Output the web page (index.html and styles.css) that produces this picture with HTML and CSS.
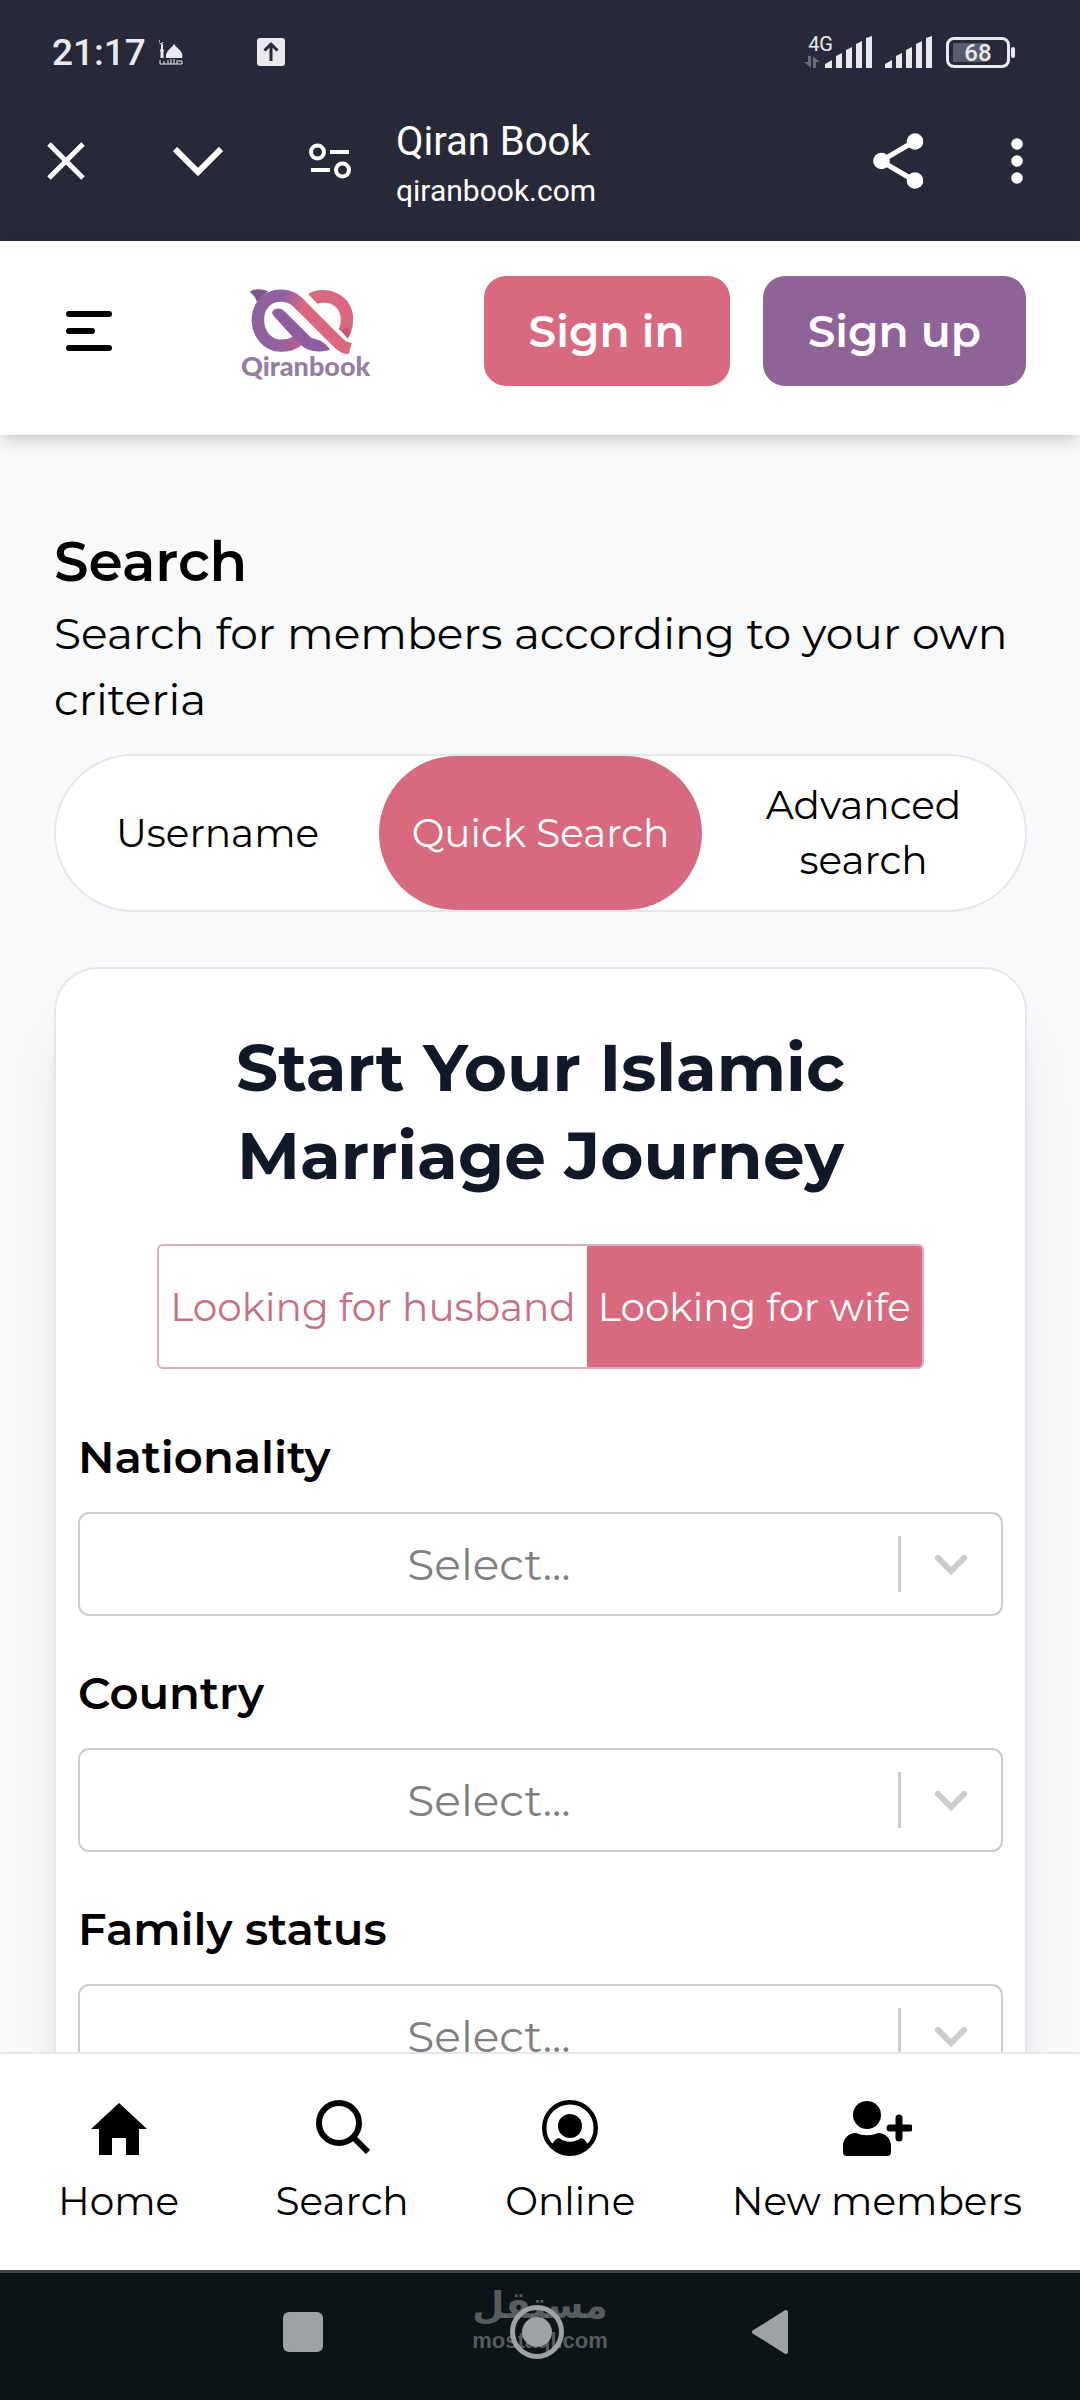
FILE: index.html
```html
<!DOCTYPE html>
<html lang="en">
<head>
<meta charset="utf-8">
<meta name="viewport" content="width=device-width, initial-scale=1">
<title>Qiran Book</title>
<link rel="stylesheet" href="styles.css">
</head>
<body>
<div class="status-bar">
  <div class="status-left">
    <span class="clock">21:17</span>
    <svg class="mosque" viewBox="0 0 24 25" width="24" height="25" aria-hidden="true">
      <path d="M1.500 18V12L1 10L2 9V5L3 3L4 5V9L5 10L4.500 12V18Z M7 18C6 11 12 9 15 4C18 9 25 11 23 18Z" fill="currentColor"/>
      <path d="M1 0a2 2 0 1 0 3 2" fill="none" stroke="currentColor"/>
      <path d="M1 20v4h22v-3h-4M5 21v3M9 20v4M12 19v5M15 19v5M18 20v4" fill="none" stroke="currentColor" stroke-width="1"/>
    </svg>
    <svg class="upload" viewBox="0 0 28 28" width="28" height="28" aria-hidden="true">
      <rect width="28" height="28" rx="3" fill="currentColor"/>
      <path d="M14 23V7M7.500 12.500L14 6l6.500 6.500" fill="none" stroke="#282938" stroke-width="3"/>
    </svg>
  </div>
  <div class="status-right">
    <div class="network">
      <span>4G</span>
      <svg viewBox="0 0 16 12" width="16" height="12" aria-hidden="true"><path d="M4 0h3v12L0 6h4zM9 12V0l7 6h-4v6z" fill="#6b6c78"/></svg>
    </div>
    <svg viewBox="0 0 48 32" width="48" height="32" aria-hidden="true"><path d="M0 32v-4l7-4v8zM11 32V20l6-3v15zM21 32V14l6-3v21zM31 32V8l6-3v27zM41 32V2l6-2v32z" fill="currentColor"/></svg>
    <svg class="second-sim" viewBox="0 0 48 32" width="48" height="32" aria-hidden="true"><path d="M0 32v-4l7-4v8zM11 32V20l6-3v15zM21 32V14l6-3v21zM31 32V8l6-3v27zM41 32V2l6-2v32z" fill="currentColor"/></svg>
    <div class="battery">68</div>
  </div>
</div>

<div class="browser-bar">
  <button type="button" class="icon-button close" aria-label="Close"><svg viewBox="0 0 38 38" width="38" height="38"><path d="M2 2l34 34M36 2L2 36" stroke="currentColor" stroke-width="5"/></svg></button>
  <button type="button" class="icon-button collapse" aria-label="Minimise"><svg viewBox="0 0 50 29" width="50" height="29"><path d="M2 2l23 23L48 2" fill="none" stroke="currentColor" stroke-width="6"/></svg></button>
  <button type="button" class="icon-button site-info" aria-label="Site settings"><svg viewBox="0 0 42 36" width="42" height="36"><g fill="none" stroke="currentColor" stroke-width="4"><circle cx="8.500" cy="9" r="6.500"/><circle cx="33.500" cy="27" r="6.500"/><path d="M21 9h19M2 27h19"/></g></svg></button>
  <div class="page-id">
    <div class="page-title">Qiran Book</div>
    <div class="page-url">qiranbook.com</div>
  </div>
  <button type="button" class="icon-button" aria-label="Share"><svg viewBox="0 0 50 56" width="50" height="56"><path d="M42 8L8 28l34 20" fill="none" stroke="currentColor" stroke-width="5"/><g fill="currentColor"><circle cx="42" cy="8.500" r="8.300"/><circle cx="8.500" cy="28" r="8.300"/><circle cx="42" cy="47.500" r="8.300"/></g></svg></button>
  <button type="button" class="icon-button more" aria-label="More options"><svg viewBox="0 0 12 46" width="12" height="46"><g fill="currentColor"><circle cx="6" cy="6" r="5.800"/><circle cx="6" cy="23" r="5.800"/><circle cx="6" cy="40" r="5.800"/></g></svg></button>
</div>

<header class="site-header">
  <button type="button" class="icon-button menu" aria-label="Menu"><svg viewBox="0 0 46 42" width="46" height="42"><path d="M3 4h40M3 21h23M3 38h40" stroke="#000" stroke-width="6" stroke-linecap="round"/></svg></button>
  <a class="logo" href="#">
    <svg class="logo-mark" viewBox="85 56 320 198" width="107" height="66" aria-hidden="true">
      <defs>
        <linearGradient id="band" gradientUnits="userSpaceOnUse" x1="190" y1="80" x2="250" y2="110"><stop offset="0" stop-color="#91619f"/><stop offset="1" stop-color="#db6880"/></linearGradient>
        <linearGradient id="tail" gradientUnits="userSpaceOnUse" x1="175" y1="0" x2="240" y2="0"><stop offset="0" stop-color="#91619f"/><stop offset="1" stop-color="#b95e86"/></linearGradient>
      </defs>
      <path d="M87 68C100 56 125 58 142 66L108 98C104 84 98 76 87 68Z" fill="#815293"/>
      <path d="M262 74C280 62 315 57 345 70C385 86 402 125 396 165C394 182 390 193 382 205L354 180C364 155 362 130 345 113C330 98 308 98 290 103Z" fill="#d9697f"/>
      <path d="M362 185L376 172C383 177 389 181 389 188L381 208Z" fill="#c2557a"/>
      <path d="M111 150C111 194 140 229 180 229C198 229 212 227 230 214" fill="none" stroke="url(#tail)" stroke-width="37"/>
      <path d="M154 128C160 116 178 113 190 125L268 202C280 214 300 202 328 241C300 250 270 247 253 237C243 231 235 223 225 213L164 146C158 140 154 135 154 128Z" fill="#8f5da0"/>
      <path d="M111 156C110 108 140 79 180 79C209 79 224 91 242 110L350 218C364 232 370 234 388 239" fill="none" stroke="url(#band)" stroke-width="37"/>
    </svg>
    <span class="logo-name">Qiranbook</span>
  </a>
  <div class="auth">
    <button type="button" class="auth-button sign-in">Sign in</button>
    <button type="button" class="auth-button sign-up">Sign up</button>
  </div>
</header>

<main class="content">
  <h1 class="page-heading">Search</h1>
  <p class="lead">Search for members according to your own criteria</p>
  <div class="tabs" role="tablist">
    <button type="button" role="tab" class="tab" aria-selected="false">Username</button>
    <button type="button" role="tab" class="tab tab-active" aria-selected="true">Quick Search</button>
    <button type="button" role="tab" class="tab" aria-selected="false">Advanced search</button>
  </div>
  <form class="card">
    <h2 class="card-title">Start Your Islamic<br>Marriage Journey</h2>
    <div class="toggle">
      <button type="button" class="toggle-option" aria-pressed="false">Looking for husband</button>
      <button type="button" class="toggle-option toggle-active" aria-pressed="true">Looking for wife</button>
    </div>
    <div class="field">
      <label class="field-label" for="nationality">Nationality</label>
      <div class="select-box">
        <select id="nationality"><option>Select...</option></select>
        <span class="separator"></span>
        <svg class="chevron" viewBox="0 0 34 22" width="34" height="22" aria-hidden="true"><path d="M4 5l13 13L30 5" fill="none" stroke="#ccc" stroke-width="6" stroke-linecap="round"/></svg>
      </div>
    </div>
    <div class="field">
      <label class="field-label" for="country">Country</label>
      <div class="select-box">
        <select id="country"><option>Select...</option></select>
        <span class="separator"></span>
        <svg class="chevron" viewBox="0 0 34 22" width="34" height="22" aria-hidden="true"><path d="M4 5l13 13L30 5" fill="none" stroke="#ccc" stroke-width="6" stroke-linecap="round"/></svg>
      </div>
    </div>
    <div class="field">
      <label class="field-label" for="family">Family status</label>
      <div class="select-box">
        <select id="family"><option>Select...</option></select>
        <span class="separator"></span>
        <svg class="chevron" viewBox="0 0 34 22" width="34" height="22" aria-hidden="true"><path d="M4 5l13 13L30 5" fill="none" stroke="#ccc" stroke-width="6" stroke-linecap="round"/></svg>
      </div>
    </div>
  </form>
</main>

<nav class="bottom-nav">
  <a href="#"><svg viewBox="0 0 56 56" height="56" width="56" aria-hidden="true"><path d="M28 3L56 29h-8v26H35V38H21v17H8V29H0z"/></svg>Home</a>
  <a href="#"><svg viewBox="0 0 56 56" height="56" width="56" aria-hidden="true"><g fill="none" stroke="#000" stroke-width="6"><circle cx="25" cy="23" r="20"/><path d="M39 37l15 15"/></g></svg>Search</a>
  <a href="#"><svg viewBox="0 0 56 56" height="56" width="56" aria-hidden="true"><circle cx="28" cy="28" r="25.800" fill="none" stroke="#000" stroke-width="4.400"/><circle cx="28" cy="26" r="12"/><path d="M9 45C12 42 13 39 17 38C24 43 32 43 39 38C43 39 44 42 47 45C37 59 19 59 9 45Z"/></svg>Online</a>
  <a href="#"><svg viewBox="0 0 70 56" height="56" width="70" aria-hidden="true"><circle cx="25" cy="15" r="14"/><path d="M14 33C21 36 29 36 36 33C44 33 49 39 49 46V52Q49 56 45 56H5Q1 56 1 52V46C1 39 6 33 14 33Z"/><path d="M57 18v20M48 28h20" stroke="#000" stroke-width="7" stroke-linecap="round"/></svg>New members</a>
</nav>

<div class="system-nav">
  <button type="button" class="icon-button" aria-label="Recent apps"><svg viewBox="0 0 40 40" width="40" height="40"><rect width="40" height="40" rx="6" fill="#9ea2a5"/></svg></button>
  <div class="home-slot">
    <button type="button" class="icon-button" aria-label="Home"><svg viewBox="0 0 54 54" width="54" height="54"><circle cx="27" cy="27" r="24.500" fill="none" stroke="#9ea2a5" stroke-width="5"/><circle cx="27" cy="27" r="15" fill="#9ea2a5"/></svg></button>
    <div class="watermark"><span class="mark-ar" lang="ar">مستقل</span><span>mostaql.com</span></div>
  </div>
  <button type="button" class="icon-button" aria-label="Back"><svg viewBox="0 0 38 46" width="38" height="46"><path d="M35 3v40L3 23z" fill="#9ea2a5" stroke="#9ea2a5" stroke-width="4" stroke-linejoin="round"/></svg></button>
</div>
</body>
</html>
```
FILE: styles.css
```css
* { box-sizing: border-box; }

body {
  margin: 0;
  height: 100vh;
  display: flex;
  flex-direction: column;
  overflow: hidden;
  background: #f8f9fb;
  color: #000;
  font-family: Montserrat, Inter, sans-serif;
  font-size: 44px;
  font-weight: 400;
}

button, select { font: inherit; color: inherit; background: none; border: 0; padding: 0; margin: 0; }
a { color: inherit; text-decoration: none; }
svg { display: block; flex: none; }
.icon-button { flex: none; display: flex; }

/* Device status bar */
.status-bar {
  flex: none;
  display: flex;
  justify-content: space-between;
  align-items: center;
  height: 104px;
  padding: 0 64px 0 52px;
  background: #282938;
  color: #e9e9ee;
  font-family: Roboto, sans-serif;
}
.status-left, .status-right { display: flex; align-items: center; }
.clock { font-size: 37px; font-weight: 500; }
.mosque { margin-left: 13px; }
.upload { margin-left: 74px; }
.network { display: flex; flex-direction: column; gap: 4px; font-size: 20px; line-height: 16px; font-weight: 400; margin-right: -8px; }
.network span { padding-left: 4px; }
.second-sim { margin-left: 12px; }
.battery {
  position: relative;
  width: 64px;
  height: 31px;
  margin: 0 6px 0 13px;
  border: 3px solid #e9e9ee;
  border-radius: 8px;
  background: linear-gradient(#5b5c69, #5b5c69) 4px 3px / 34px 19px no-repeat;
  font-size: 24px;
  font-weight: 500;
  line-height: 27px;
  text-align: center;
}
.battery::after {
  content: "";
  position: absolute;
  left: 62px;
  top: 7px;
  width: 4px;
  height: 11px;
  border-radius: 2px;
  background: #e9e9ee;
}

/* In-app browser toolbar */
.browser-bar {
  flex: none;
  display: flex;
  align-items: center;
  height: 137px;
  padding: 0 57px 23px 47px;
  background: #282938;
  color: #fff;
  font-family: Roboto, sans-serif;
  font-weight: 400;
}
.collapse { margin-left: 88px; }
.site-info { margin-left: 86px; }
.page-id { flex: 1; margin-left: 45px; padding-top: 9px; }
.page-title { font-size: 40px; line-height: 50px; }
.page-url { font-size: 30px; line-height: 48px; }
.more { margin-left: 88px; }

/* Site header */
.site-header {
  flex: none;
  display: flex;
  align-items: center;
  height: 194px;
  padding: 0 54px 14px 66px;
  background: #fff;
  box-shadow: 0 11px 17px -3px rgba(0, 0, 0, .12), 0 5px 11px -5px rgba(0, 0, 0, .12);
  position: relative;
}
.logo { margin-left: 129px; padding-top: 4px; display: flex; flex-direction: column; align-items: flex-start; }
.logo-mark { margin-left: 8px; }
.logo-name { font-family: Lato, sans-serif; font-weight: 900; font-size: 27px; line-height: 24px; color: #987da3; }
.auth { display: flex; gap: 33px; margin-left: auto; }
.auth-button { height: 110px; padding: 0 45px; border-radius: 22px; color: #fff; font-weight: 600; }
.sign-in { background: #d86a80; }
.sign-up { background: #8f6397; }

/* Search page */
.content { flex: 1; min-height: 0; overflow: hidden; padding: 88px 53px 0 54px; }
.page-heading { margin: 0; font-size: 55px; font-weight: 600; line-height: 77px; }
.lead { margin: 0; line-height: 66px; }
.tabs {
  display: grid;
  grid-template-columns: repeat(3, 1fr);
  margin-top: 22px;
  border: 2px solid #e5e7eb;
  border-radius: 80px;
  background: #fff;
  font-size: 39px;
  line-height: 55px;
}
.tab { padding: 22px 44px; border-radius: 80px; }
.tab-active { padding: 22px 0; background: #d86a80; color: #fff; }

.card {
  margin-top: 55px;
  padding: 55px 22px;
  border: 2px solid #e5e7eb;
  border-radius: 44px;
  background: #fff;
  box-shadow: 0 55px 69px -14px rgba(0, 0, 0, .1), 0 22px 28px -17px rgba(0, 0, 0, .1);
}
.card-title { margin: 0; font-size: 66px; font-weight: 700; line-height: 88px; text-align: center; color: #111827; }
.toggle {
  display: flex;
  width: fit-content;
  margin: 44px auto 0;
  border: 2px solid #dcabc4;
  border-radius: 6px;
  overflow: hidden;
  font-size: 39px;
  color: #c86f86;
}
.toggle-option { height: 121px; padding: 0 11px; }
.toggle-active { background: #d86a80; color: #fff; }

.field { margin-top: 55px; }
.field + .field { margin-top: 44px; }
.field-label { display: block; margin-bottom: 22px; font-size: 45px; font-weight: 600; line-height: 66px; }
.select-box {
  display: flex;
  align-items: center;
  height: 104px;
  border: 2px solid #ccc;
  border-radius: 11px;
  padding-right: 33px;
}
.select-box select { flex: 1; height: 100%; appearance: none; text-align: center; text-align-last: center; color: #808080; }
.separator { width: 3px; height: 56px; background: #ccc; }
.chevron { margin-left: 33px; }

/* Bottom navigation */
.bottom-nav {
  flex: none;
  display: flex;
  justify-content: space-between;
  height: 218px;
  padding: 46px 58px 0;
  border-top: 2px solid #e5e7eb;
  background: #fff;
  font-size: 39px;
  line-height: 55px;
}
.bottom-nav a { display: flex; flex-direction: column; align-items: center; gap: 18px; }

/* Device navigation */
.system-nav {
  flex: none;
  display: flex;
  justify-content: center;
  align-items: center;
  gap: 187px;
  height: 130px;
  padding: 0 8px 10px 0;
  border-top: 3px solid #3f4548;
  background: #0d1417;
}
.home-slot { position: relative; }
.watermark {
  position: absolute;
  left: 50%;
  top: -22px;
  transform: translateX(-50%);
  margin-left: 3px;
  display: flex;
  flex-direction: column;
  align-items: center;
  font: 700 22px/24px "Liberation Sans", sans-serif;
  color: rgba(160, 165, 168, .5);
}
.mark-ar { font: 700 37px/46px "DejaVu Sans", sans-serif; }
```
